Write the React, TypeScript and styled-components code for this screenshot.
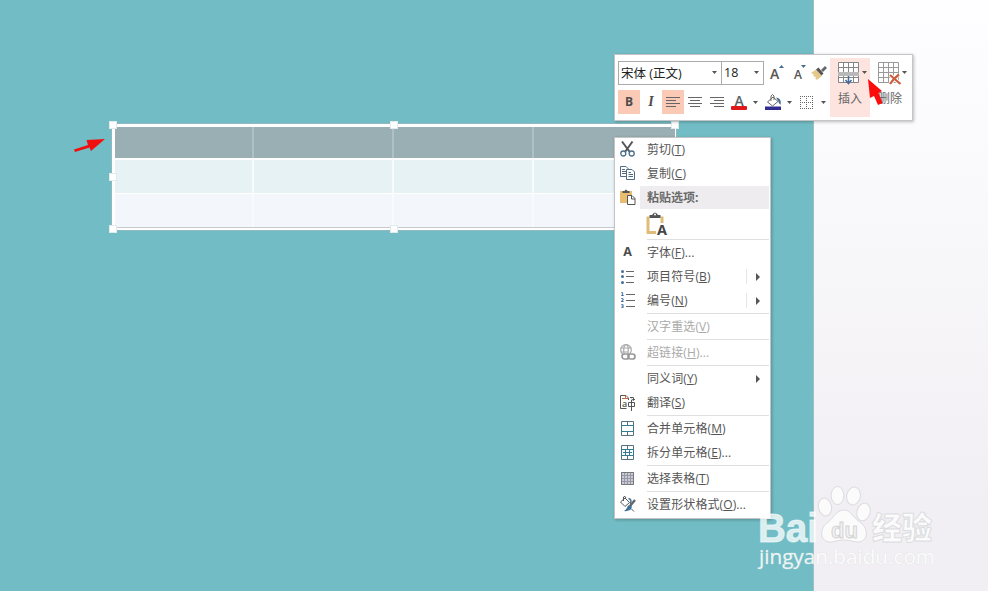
import React from "react";
import styled, { createGlobalStyle, css } from "styled-components";

const Global = createGlobalStyle`
  * { box-sizing: border-box; }
  html, body { margin: 0; }
  body {
    font-family: "Open Sans", "Noto Sans CJK SC", sans-serif;
    font-size: 12px;
    color: #555;
    overflow: hidden;
  }
  svg { display: block; flex: none; overflow: visible; }
`;

const Screen = styled.main`
  position: relative;
  width: 988px;
  height: 591px;
  overflow: hidden;
  display: flex;
`;

const Slide = styled.section`
  width: 814px;
  background: #72bdc5;
  border-right: 1px solid #9dbfc3;
  padding: 123px 0 0 111px;
`;

const Margin = styled.aside`
  flex: 1;
  background: linear-gradient(#fefdff, #f8f7fa 40%, #f1eff3 85%, #f1eff3);
`;

const TableFrame = styled.div`
  position: relative;
  width: 566px;
  height: 108px;
  border: 1px solid #8fb9be;
  background: #fff;
  padding: 3px 2px 3px 3px;
`;

const Grid = styled.div`
  display: grid;
  grid-template-columns: 139px 140px 140px 141px;
  grid-template-rows: 31px 35px 34px;
  border-bottom: 1px solid #c9c9cd;
  height: 101px;
`;

const tones = ["#9aafb3", "#e6f2f4", "#f3f7fb"];
const Cell = styled.div<{ $row: number; $last: boolean }>`
  background: ${(p) => tones[p.$row]};
  border-right: ${(p) => (p.$last ? 0 : 2)}px solid
    ${(p) => (p.$row === 0 ? "#b0c1c4" : "#f8fbfc")};
  ${(p) => p.$row > 0 && css`border-top: ${p.$row === 1 ? 2 : 1}px solid #fff;`}
`;

const Handle = styled.i<{ $x: number; $y: number }>`
  position: absolute;
  left: ${(p) => p.$x}px;
  top: ${(p) => p.$y}px;
  width: 8px;
  height: 8px;
  background: #fff;
  border: 1px solid #e2eaeb;
`;

const Popup = styled.div`
  position: absolute;
  left: 614px;
  background: #fff;
  border: 1px solid #c3c5c6;
  box-shadow: 1px 1px 3px rgba(0, 0, 0, 0.25);
`;

const Toolbar = styled(Popup)`
  top: 54px;
  width: 299px;
  height: 67px;
  display: flex;
  padding: 3px 0 0 3px;
`;

const Tools = styled.div`
  width: 212px;
  padding-top: 3px;
`;

const ToolRow = styled.div`
  display: flex;
  align-items: center;
  height: 24px;
  & + & { margin-top: 5px; }
`;

const Field = styled.div<{ $w: number }>`
  width: ${(p) => p.$w}px;
  height: 24px;
  border: 1px solid #ababab;
  padding: 0 4px 2px 2px;
  display: flex;
  align-items: center;
  justify-content: space-between;
  color: #222;
  font-size: 12.5px;
  white-space: nowrap;
  & + & { margin-left: -1px; }
`;

const ToolButton = styled.div<{ $w: number; $active?: boolean }>`
  width: ${(p) => p.$w}px;
  height: 24px;
  display: flex;
  align-items: center;
  justify-content: center;
  flex: none;
  background: ${(p) => (p.$active ? "#fbcab6" : "transparent")};
`;

const Glyph = styled.span<{ $size?: number; $italic?: boolean }>`
  font-size: ${(p) => p.$size ?? 12}px;
  font-weight: 700;
  line-height: 1;
  color: #4c4c4c;
  ${(p) => p.$italic && css`font-family: "Liberation Serif", serif; font-style: italic;`}
`;

const BigButton = styled.div<{ $w: number; $active?: boolean }>`
  width: ${(p) => p.$w}px;
  height: 59px;
  flex: none;
  background: ${(p) => (p.$active ? "#fde4df" : "transparent")};
  padding: 4px 0 0 8px;
  color: #666;
`;

const BigIcon = styled.div`
  display: flex;
  align-items: center;
  gap: 3px;
  height: 21px;
`;

const BigLabel = styled.div`
  margin: 7px 0 0 0;
  line-height: 18px;
`;

const Menu = styled(Popup)`
  top: 137px;
  width: 157px;
  height: 382px;
`;

const Item = styled.div<{ $disabled?: boolean; $header?: boolean }>`
  display: flex;
  align-items: center;
  height: 24px;
  color: ${(p) => (p.$disabled ? "#aaa" : "#555")};
  ${(p) => p.$header && css`font-weight: 700; color: #6a6a6a;`}
`;

const IconBox = styled.span`
  width: 25px;
  height: 22px;
  margin-bottom: 2px;
  display: flex;
  align-items: center;
  justify-content: center;
`;

const Label = styled.span<{ $header?: boolean }>`
  flex: 1;
  height: 23px;
  line-height: 22px;
  padding-left: 7px;
  margin-right: 1px;
  ${(p) => p.$header && css`background: #eeecee; margin-top: -1px; line-height: 23px;`}
  white-space: nowrap;
  letter-spacing: ${(p) => (p.$header ? 0 : 0.1)}px;
  u { text-underline-offset: 1px; }
`;

const SubArrow = styled.span<{ $split?: boolean }>`
  width: 24px;
  height: 15px;
  margin-bottom: 1px;
  border-left: 1px solid ${(p) => (p.$split ? "#e6e6e6" : "transparent")};
  display: flex;
  align-items: center;
  padding-left: 9px;
`;

const Divider = styled.div`
  height: 1px;
  margin: 0 1px 1px 32px;
  background: #dfdfdf;
`;

const PasteRow = styled.div`
  height: 29px;
  padding: 3px 0 0 31px;
`;

const NumberMarks = styled.span`
  display: grid;
  grid-template-columns: 5px 9px;
  grid-template-rows: repeat(3, 6px);
  align-items: center;
  font: 700 5px/5px "DejaVu Sans", sans-serif;
  color: #315c87;
  b { height: 5px; overflow: hidden; }
  i { height: 1px; background: #666; }
`;

const Overlay = styled.svg<{ $x: number; $y: number }>`
  position: absolute;
  left: ${(p) => p.$x}px;
  top: ${(p) => p.$y}px;
`;

const Caret = () => (
  <svg width="5" height="3"><path d="M0 0H5L2.5 3Z" fill="#555" /></svg>
);

const Lines = ({ align }: { align: "l" | "c" | "r" }) => (
  <svg width="14" height="11" stroke="#666" fill="none">
    {[0, 1, 2, 3].map((i) => {
      const w = i % 2 ? 10 : 14;
      const x = align === "l" ? 0 : align === "r" ? 14 - w : (14 - w) / 2;
      return <path key={i} d={`M${x} ${i * 3 + 0.5}h${w}`} />;
    })}
  </svg>
);

const GrowIcon = ({ small }: { small?: boolean }) => (
  <svg width="14" height="16">
    <text x={small ? 2 : 0} y="14" fontSize={small ? 12 : 14} fontWeight="600" fill="#555">A</text>
    {small
      ? <path d="M9 0H14L11.500 3Z" fill="#476b91" />
      : <path d="M9 3H14L11.500 0Z" fill="#476b91" />}
  </svg>
);

const BrushIcon = () => (
  <svg width="17" height="16">
    <path d="M0 8L5 4.500L11 11L6 15L4 13L5 12L2 11L3 9.500Z" fill="#e5c98c" />
    <path d="M5 4.500L7.500 2.500L12.500 8.500L10.500 10.500Z" fill="#555" />
    <path d="M10 5L14 1L16 3L12 7Z" fill="#666" />
  </svg>
);

const BucketIcon = () => (
  <svg width="16" height="16" fill="none">
    <path d="M2.500 8L8 3L13 7.500L7.500 12Z" fill="#fff" stroke="#666" />
    <path d="M6 7V2Q7.500 -1 9 2V6" stroke="#666" />
    <path d="M11 3.500Q17 4 15.500 11Q13.500 9 13 6.500Z" fill="#3e6b93" />
    <path d="M0 12.500H16V16H0Z" fill="#322c91" />
  </svg>
);

const FontColorIcon = () => (
  <svg width="16" height="15">
    <text x="3.500" y="10.500" fontSize="14" fontWeight="600" fill="#5a6467">A</text>
    <rect y="11" width="16" height="4" rx="1" fill="#e01818" />
  </svg>
);

const BorderIcon = () => (
  <svg width="13" height="13" fill="none" stroke="#666" strokeDasharray="1 1">
    <path d="M0 .5H13M0 6.500H13M0 12.500H13M.5 0V13M6.500 0V13M12.500 0V13" />
  </svg>
);

const TableInsertIcon = () => (
  <svg width="21" height="21" fill="none" stroke="#858585">
    <path d="M.5 .5H20.500V20.500H.5ZM.5 5.500H20.500M5.500 .5V20.500M10.500 .5V10M15.500 .5V20.500M.5 15.500H20.500" fill="#fff" />
    <path d="M0 10H21V14H0Z" fill="#b9b9b9" stroke="none" />
    <path d="M10.500 14V21M7.500 18L10.500 21.500L13.500 18" stroke="#426a9b" strokeWidth="1.500" />
  </svg>
);

const TableDeleteIcon = () => (
  <svg width="21" height="21" fill="none" stroke="#999">
    <path d="M.5 .5H20.500V20.500H.5ZM.5 5.500H20.500M.5 10.500H20.500M.5 15.500H20.500M5.500 .5V20.500M10.500 .5V20.500M15.500 .5V20.500" />
    <path d="M12 13L22 21.500M21 12.500Q15 17 12.500 21.500" stroke="#fff" strokeWidth="4" />
    <path d="M12 13L22.500 22M21 12.500Q15 17 12 22" stroke="#cb5e3c" strokeWidth="2.200" />
  </svg>
);

const icons: Record<string, React.ReactNode> = {
  cut: (
    <svg width="15" height="16" fill="none">
      <path d="M2 .5L9.800 11M12.500 .5L5 11" stroke="#555" strokeWidth="2" />
      <circle cx="3.300" cy="12.500" r="2.500" stroke="#48708e" strokeWidth="1.300" />
      <circle cx="11.700" cy="12.500" r="2.500" stroke="#48708e" strokeWidth="1.300" />
    </svg>
  ),
  copy: (
    <svg width="15" height="14" fill="#fff" stroke="#526d82">
      <path d="M.5 .5H6L8.500 3V10.500H.5ZM2 3.500H5M2 5.500H6M2 7.500H6" />
      <path d="M6.500 3.500H12L14.500 6V13.500H6.500ZM8.500 6.500H11M8.500 8.500H13M8.500 10.500H13" />
    </svg>
  ),
  paste: (
    <svg width="15" height="16">
      <path d="M0 2H12V14H0Z" fill="#e9bd70" />
      <path d="M2.500 4V2H4.500Q6 -1 7.500 2H9.500V4Z" fill="#555" />
      <path d="M7.500 6.500H12L15 9.500V15.500H7.500ZM11.500 6.500V10H15" fill="#fff" stroke="#555" />
    </svg>
  ),
  font: <Glyph $size={12.5}>A</Glyph>,
  bullets: (
    <svg width="13" height="15">
      <path d="M5 2.500H13M5 7.500H13M5 13.500H13" stroke="#666" />
      <g fill="#476f98"><circle cx="1.500" cy="2.500" r="1.500" /><circle cx="1.500" cy="7.500" r="1.500" /><circle cx="1.500" cy="13.500" r="1.500" /></g>
    </svg>
  ),
  numbers: <NumberMarks><b>1</b><i /><b>2</b><i /><b>3</b><i /></NumberMarks>,
  link: (
    <svg width="15" height="16" fill="none" stroke="#aaa" strokeWidth="1.200">
      <circle cx="6" cy="6" r="5.300" /><ellipse cx="6" cy="6" rx="2.300" ry="5.300" />
      <path d="M.5 4H11.500M.5 8H8" />
      <rect x="2" y="10" width="7" height="5" rx="2.500" fill="#fff" stroke="#999" strokeWidth="1.700" />
      <rect x="8" y="10" width="7" height="5" rx="2.500" stroke="#999" strokeWidth="1.700" />
    </svg>
  ),
  translate: (
    <svg width="15" height="15" fill="none" stroke="#555">
      <path d="M6.500 13.500H.5V.5H6L8.500 3V5" /><path d="M2 3.500H6M5.500 .5V3.500H8.500" stroke="#c66c4d" />
      <text x="2" y="12" fontSize="9" fontWeight="600" fill="#555" stroke="none">a</text>
      <path d="M8.500 7.500H14.500V11.500H8.500ZM11.500 5V16" /><path d="M10 2.500H13.500V5M11.500 4L13.500 5.500L15 4" />
    </svg>
  ),
  merge: (
    <svg width="13" height="15" fill="none" stroke="#55717c">
      <path d="M.5 .5H12.500V14.500H.5ZM6.500 .5V4M6.500 11V14.500" /><path d="M.5 4.500H12.500V10.500H.5Z" stroke="#357b91" />
    </svg>
  ),
  split: (
    <svg width="13" height="15" fill="none" stroke="#55717c">
      <path d="M.5 .5H12.500V14.500H.5ZM6.500 .5V4M6.500 11V14.500" /><path d="M.5 4.500H12.500V10.500H.5ZM4.500 5V10M8.500 5V10M2 7.500H11" stroke="#357b91" />
    </svg>
  ),
  select: (
    <svg width="13" height="13" fill="#c9cbdb" stroke="#9898a4">
      <path d="M.5 .5H12.500V12.500H.5ZM3.500 .5V12.500M6.500 .5V12.500M9.500 .5V12.500M.5 3.500H12.500M.5 6.500H12.500M.5 9.500H12.500" />
      <path d="M.5 .5H12.500V12.500H.5Z" fill="none" stroke="#777" />
    </svg>
  ),
  shape: (
    <svg width="15" height="16" fill="none" stroke="#555">
      <path d="M.5 6L5 2L9.500 6.500L5 10.500ZM3.500 5V1Q5 -1 6 2" />
      <path d="M8.500 2.500Q12 3 10.500 8" stroke="#3e7296" strokeWidth="1.500" />
      <path d="M15 4L10 10" stroke="#666" strokeWidth="2.400" />
      <path d="M11 9Q13 12 10 14Q7 15.500 4 15Q7 13 8 9.500Z" fill="#3e7296" stroke="none" />
      <path d="M11.500 13L14 15.500" />
    </svg>
  ),
};

type Entry = { icon?: string; text: string; k: string; tail?: string; sub?: "plain" | "split"; off?: boolean };
const groups: Entry[][] = [
  [
    { icon: "font", text: "字体", k: "F", tail: "..." },
    { icon: "bullets", text: "项目符号", k: "B", sub: "split" },
    { icon: "numbers", text: "编号", k: "N", sub: "split" },
  ],
  [{ text: "汉字重选", k: "V", off: true }],
  [{ icon: "link", text: "超链接", k: "H", tail: "...", off: true }],
  [
    { text: "同义词", k: "Y", sub: "plain" },
    { icon: "translate", text: "翻译", k: "S" },
  ],
  [
    { icon: "merge", text: "合并单元格", k: "M" },
    { icon: "split", text: "拆分单元格", k: "E", tail: "..." },
  ],
  [{ icon: "select", text: "选择表格", k: "T" }],
  [{ icon: "shape", text: "设置形状格式", k: "O", tail: "..." }],
];

const MenuItem = ({ e }: { e: Entry }) => (
  <Item $disabled={e.off}>
    <IconBox>{e.icon && icons[e.icon]}</IconBox>
    <Label>{e.text}(<u>{e.k}</u>){e.tail}</Label>
    {e.sub && (
      <SubArrow $split={e.sub === "split"}>
        <svg width="4" height="8"><path d="M0 0L4 4L0 8Z" fill="#555" /></svg>
      </SubArrow>
    )}
  </Item>
);

const handles = [[-3, -3], [278, -3], [559, -3], [-3, 49], [-3, 101], [278, 101]];

export default function App() {
  return (
    <Screen>
      <Global />
      <Slide>
        <TableFrame>
          <Grid>
            {[0, 1, 2].map((r) => [0, 1, 2, 3].map((c) => <Cell key={`${r}-${c}`} $row={r} $last={c === 3} />))}
          </Grid>
          {handles.map(([x, y]) => <Handle key={`${x},${y}`} $x={x} $y={y} />)}
        </TableFrame>
      </Slide>
      <Margin />

      <Toolbar>
        <Tools>
          <ToolRow>
            <Field $w={104}>宋体 (正文)<Caret /></Field>
            <Field $w={43}>18<Caret /></Field>
            <ToolButton $w={26}><GrowIcon /></ToolButton>
            <ToolButton $w={18}><GrowIcon small /></ToolButton>
            <ToolButton $w={22}><BrushIcon /></ToolButton>
          </ToolRow>
          <ToolRow>
            <ToolButton $w={22} $active><Glyph>B</Glyph></ToolButton>
            <ToolButton $w={22}><Glyph $size={14} $italic>I</Glyph></ToolButton>
            <ToolButton $w={22} $active><Lines align="l" /></ToolButton>
            <ToolButton $w={22}><Lines align="c" /></ToolButton>
            <ToolButton $w={22}><Lines align="r" /></ToolButton>
            <ToolButton $w={22}><FontColorIcon /></ToolButton>
            <ToolButton $w={10}><Caret /></ToolButton>
            <ToolButton $w={26}><BucketIcon /></ToolButton>
            <ToolButton $w={7}><Caret /></ToolButton>
            <ToolButton $w={27}><BorderIcon /></ToolButton>
            <ToolButton $w={7}><Caret /></ToolButton>
          </ToolRow>
        </Tools>
        <BigButton $w={40} $active>
          <BigIcon><TableInsertIcon /><Caret /></BigIcon>
          <BigLabel>插入</BigLabel>
        </BigButton>
        <BigButton $w={40}>
          <BigIcon><TableDeleteIcon /><Caret /></BigIcon>
          <BigLabel>删除</BigLabel>
        </BigButton>
      </Toolbar>

      <Menu>
        <MenuItem e={{ icon: "cut", text: "剪切", k: "T" }} />
        <MenuItem e={{ icon: "copy", text: "复制", k: "C" }} />
        <Item $header>
          <IconBox>{icons.paste}</IconBox>
          <Label $header>粘贴选项:</Label>
        </Item>
        <PasteRow>
          <svg width="21" height="23">
            <path d="M2 3.500V19.500H10M16 3.500V10" fill="none" stroke="#dfbd78" strokeWidth="3" />
            <path d="M3.500 5V2H6Q9 -3 12 2H14.500V5Z" fill="#555" />
            <circle cx="9" cy="1.500" r="1" fill="#fff" />
            <text x="11" y="22" fontSize="14.500" fontWeight="700" fill="#444">A</text>
          </svg>
        </PasteRow>
        {groups.map((g, i) => (
          <React.Fragment key={i}>
            <Divider />
            {g.map((e) => <MenuItem key={e.text} e={e} />)}
          </React.Fragment>
        ))}
      </Menu>

      <Overlay $x={74} $y={138} width="31" height="14">
        <path d="M0 11.500L14 7L12.500 2L31 1L17 13L15.500 9.500L1 14Z" fill="#f01010" />
      </Overlay>
      <Overlay $x={868} $y={79} width="14" height="26">
        <path d="M0 0L14 12L10.500 14L14.500 24L10 26L6 17L2 19Z" fill="#fb0d0d" />
      </Overlay>

      <Overlay $x={755} $y={482} width="190" height="95">
        <g fill="#fff" fillOpacity=".75" stroke="#c9cccf" strokeOpacity=".6" strokeWidth="1">
          <ellipse cx="70" cy="25" rx="6.500" ry="9" transform="rotate(-12 70 25)" />
          <ellipse cx="82.500" cy="13.500" rx="6.300" ry="9" />
          <ellipse cx="98.500" cy="14" rx="6.800" ry="9" transform="rotate(12 98.500 14)" />
          <ellipse cx="108.500" cy="30" rx="6.500" ry="9" transform="rotate(15 108.500 30)" />
          <path d="M89 28C96 28 98 36 106 41C114 47 113 60 103 60C98 60 96 58 89 58C82 58 80 60 75 60C65 60 64 47 72 41C80 35 81 28 89 28Z" />
          <g fontFamily="Liberation Sans, Noto Sans CJK SC, sans-serif" fontWeight="700">
            <text x="3" y="60" fontSize="40" textLength="60" lengthAdjust="spacingAndGlyphs" stroke="#fff">Bai</text>
            <text x="76" y="56" fontSize="22" textLength="27" stroke="#bbb" fill="#eee">du</text>
            <text x="117" y="57" fontSize="31" fontWeight="900" textLength="60" lengthAdjust="spacingAndGlyphs">经验</text>
          </g>
          <text x="4" y="82" fontSize="20" textLength="176" lengthAdjust="spacingAndGlyphs" stroke="#d5d8da" strokeWidth=".7" paintOrder="stroke" fillOpacity=".85">jingyan.baidu.com</text>
        </g>
      </Overlay>
    </Screen>
  );
}
